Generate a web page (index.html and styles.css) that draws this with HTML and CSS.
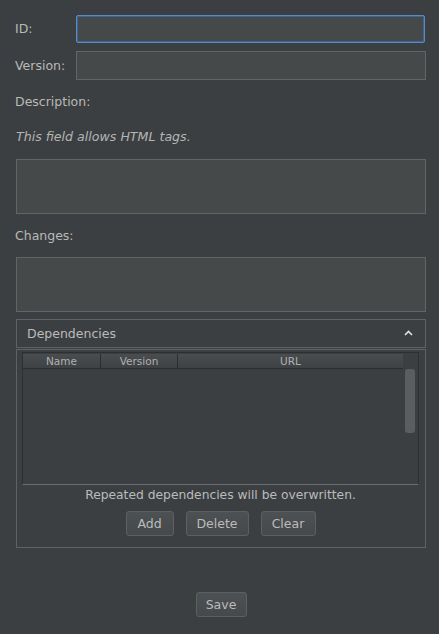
FILE: index.html
```html
<!DOCTYPE html>
<html>
<head>
<meta charset="utf-8">
<link rel="stylesheet" href="styles.css">
</head>
<body>
<div class="form">
  <div class="row">
    <span class="label lbl-fixed">ID:</span>
    <div class="field focused"></div>
  </div>
  <div class="row row-version">
    <span class="label lbl-fixed">Version:</span>
    <div class="field"></div>
  </div>
  <div class="label desc-label">Description:</div>
  <div class="hint">This field allows HTML tags.</div>
  <div class="area desc-area"></div>
  <div class="label changes-label">Changes:</div>
  <div class="area changes-area"></div>

  <div class="deps-head">
    <span class="deps-title">Dependencies</span>
    <svg class="chev" width="9" height="6" viewBox="0 0 9 6"><path d="M1 5 L4.5 1.5 L8 5" fill="none" stroke="#e0e0e0" stroke-width="1.6"/></svg>
  </div>
  <div class="deps-body">
    <div class="table">
      <div class="table-main">
        <div class="thead">
          <div class="th th-name">Name</div>
          <div class="th th-version">Version</div>
          <div class="th th-url">URL</div>
        </div>
      </div>
      <div class="vscroll"><div class="thumb"></div></div>
    </div>
    <div class="note">Repeated dependencies will be overwritten.</div>
    <div class="buttons">
      <div class="btn btn-add">Add</div>
      <div class="btn btn-delete">Delete</div>
      <div class="btn btn-clear">Clear</div>
    </div>
  </div>
  <div class="save-wrap">
    <div class="btn btn-save">Save</div>
  </div>
</div>
</body>
</html>
```

FILE: styles.css
```css
html, body {
  margin: 0;
  padding: 0;
  background: #3c3f41;
  height: 100%;
}
body {
  font-family: "DejaVu Sans", "Noto Sans", sans-serif;
  font-size: 12.5px;
  color: #bbbbbb;
}
.form {
  padding: 15px 13px 0 16px;
  display: flex;
  flex-direction: column;
}
.row {
  display: flex;
  align-items: center;
  height: 28px;
}
.row-version {
  margin-top: 8px;
  height: 29px;
}
.label {
  line-height: 16px;
  color: #b9b9b9;
}
.lbl-fixed {
  width: 61px;
  margin-left: -1px;
}
.field {
  flex: 1;
  height: 100%;
  box-sizing: border-box;
  background: #45494a;
  border: 1px solid #646464;
}
.field.focused {
  border: 1px solid #5a8ac0;
  box-shadow: inset 0 0 0 1px #3e6590;
  border-radius: 2px;
  margin-right: 1px;
}
.desc-label {
  margin-top: 14px;
  margin-left: -1px;
}
.hint {
  margin-top: 19px;
  line-height: 16px;
  font-style: italic;
  font-size: 12.6px;
  color: #b5b5b5;
}
.area {
  height: 55px;
  box-sizing: border-box;
  background: #45494a;
  border: 1px solid #646464;
}
.desc-area { margin-top: 14px; }
.changes-label { margin-top: 14px; margin-left: -1px; }
.changes-area { margin-top: 13px; }

.deps-head {
  margin-top: 7px;
  height: 29px;
  box-sizing: border-box;
  border: 1px solid #5f6162;
  display: flex;
  align-items: center;
  justify-content: space-between;
  padding: 0 12px 0 10px;
}
.deps-title {
  font-size: 12.5px;
  color: #bbbbbb;
}
.chev { display: block; margin-top: -1px; }

.deps-body {
  margin-top: 1px;
  height: 199px;
  box-sizing: border-box;
  border: 1px solid #5f6162;
  padding: 2px 6px 0 5px;
  display: flex;
  flex-direction: column;
}
.table {
  height: 133px;
  flex: none;
  box-sizing: border-box;
  border: 1px solid #2d2f30;
  border-bottom: 1px solid #6a6c6d;
  display: flex;
  padding-top: 1px;
}
.table-main {
  flex: 1;
}
.thead {
  display: flex;
  height: 14px;
  background: linear-gradient(#4a4d4f, #3f4244);
  border-bottom: 1px solid #2b2d2e;
  font-size: 10.5px;
  line-height: 14px;
  color: #b0b0b0;
}
.th {
  text-align: center;
  box-sizing: border-box;
}
.th-name { width: 78px; border-right: 1px solid #2b2d2e; }
.th-version { width: 77px; border-right: 1px solid #2b2d2e; }
.th-url { flex: 1; }
.vscroll {
  width: 15px;
  position: relative;
}
.thumb {
  position: absolute;
  left: 2px;
  top: 15px;
  width: 10px;
  height: 64px;
  border-radius: 3px;
  background: #5b5e60;
}
.note {
  margin-top: 2px;
  line-height: 16px;
  text-align: center;
  font-size: 12.3px;
  color: #bbbbbb;
}
.buttons {
  margin-top: 8px;
  display: flex;
  justify-content: center;
  gap: 12px;
}
.btn {
  height: 25px;
  box-sizing: border-box;
  border: 1px solid #5e6060;
  border-radius: 3px;
  background: linear-gradient(#4d5153, #45494b);
  display: flex;
  align-items: center;
  justify-content: center;
  font-size: 12.5px;
  color: #bbbbbb;
}
.btn-add { width: 48px; }
.btn-delete { width: 63px; }
.btn-clear { width: 55px; }
.save-wrap {
  margin-top: 44px;
  display: flex;
  justify-content: center;
}
.btn-save { width: 51px; }
```
